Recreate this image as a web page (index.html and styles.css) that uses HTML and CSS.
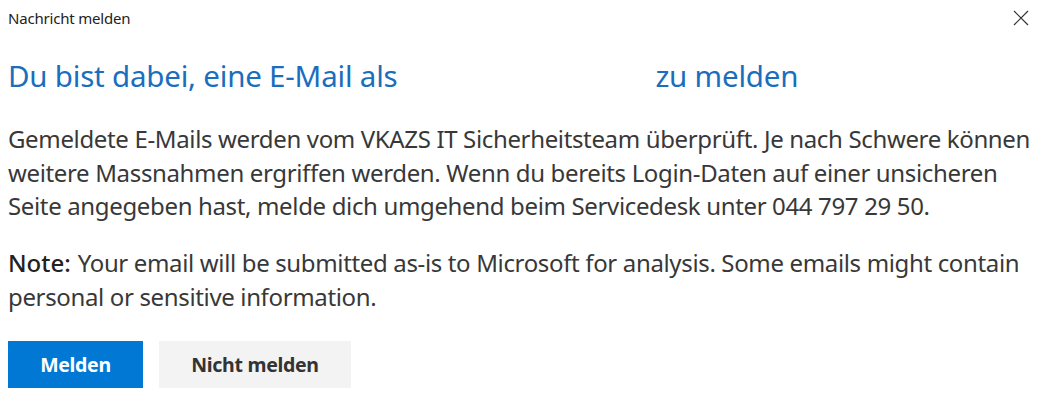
FILE: index.html
```html
<!DOCTYPE html>
<html lang="de">
<head>
<meta charset="utf-8">
<title>Nachricht melden</title>
<link rel="stylesheet" href="styles.css">
</head>
<body>
<div class="dialog">
  <header class="titlebar">
    <span class="title">Nachricht melden</span>
    <button class="close" aria-label="Schliessen">
      <svg width="16" height="16" viewBox="0 0 16 16"><path d="M1 1 L15 15 M15 1 L1 15" stroke="#333" stroke-width="1.2" fill="none"/></svg>
    </button>
  </header>
  <h1 class="heading">Du bist dabei, eine E-Mail als <span class="redacted"></span> zu melden</h1>
  <p class="text">Gemeldete E-Mails werden vom VKAZS IT Sicherheitsteam überprüft. Je nach Schwere können weitere Massnahmen ergriffen werden. Wenn du bereits Login-Daten auf einer unsicheren Seite angegeben hast, melde dich umgehend beim Servicedesk unter 044 797 29 50.</p>
  <p class="text note"><strong class="note-label">Note:</strong> Your email will be submitted as-is to Microsoft for analysis. Some emails might contain personal or sensitive information.</p>
  <div class="actions">
    <button class="btn primary">Melden</button>
    <button class="btn secondary">Nicht melden</button>
  </div>
</div>
</body>
</html>
```
FILE: styles.css
```css
html, body {
  margin: 0;
  padding: 0;
  background: #fff;
}
body {
  font-family: "Noto Sans", "Open Sans", sans-serif;
  color: #333;
}
.dialog {
  padding: 0 0 0 8px;
  width: 1042px;
  box-sizing: border-box;
}
.titlebar {
  display: flex;
  justify-content: space-between;
  align-items: center;
  height: 36px;
}
.title {
  font-size: 15px;
  color: #222;
  letter-spacing: -0.2px;
}
.close {
  background: none;
  border: 0;
  padding: 0;
  margin-right: 13px;
  width: 16px;
  height: 16px;
  display: flex;
}
.heading {
  margin: 20px 0 0;
  font-weight: 400;
  font-size: 29.5px;
  line-height: 40px;
  color: #1a6ebd;
  letter-spacing: -0.2px;
}
.redacted {
  display: inline-block;
  width: 243px;
}
.text {
  margin: 26px 0 0;
  font-size: 24px;
  line-height: 33.5px;
  color: #383838;
  letter-spacing: -0.35px;
}
.note {
  margin-top: 23.5px;
}
.note-label {
  font-weight: 500;
  color: #222;
  letter-spacing: 0;
  margin-right: 1px;
}
.actions {
  display: flex;
  gap: 16px;
  margin-top: 28px;
}
.btn {
  height: 47px;
  border: 0;
  font-family: "Noto Sans", "Open Sans", sans-serif;
  font-size: 19.5px;
  font-weight: 700;
  letter-spacing: -0.3px;
}
.primary {
  width: 135px;
  background: #0078d4;
  color: #fff;
}
.secondary {
  width: 192px;
  background: #f3f3f3;
  color: #333;
}
```
